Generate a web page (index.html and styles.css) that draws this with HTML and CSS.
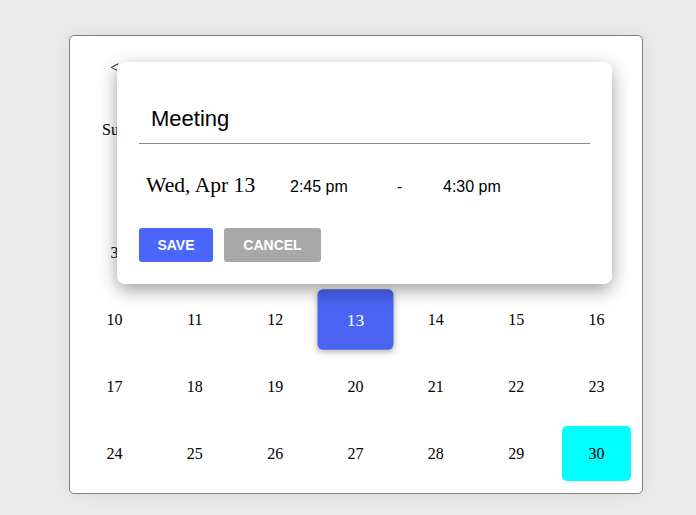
FILE: index.html
```html
<!DOCTYPE html>
<html>
<head>
<meta charset="utf-8">
<link rel="stylesheet" href="styles.css">
</head>
<body>
<div class="calendar">
  <div class="cal-header">
    <span class="nav">&lt;</span>
    <span class="month">April 2022</span>
    <span class="nav">&gt;</span>
  </div>
  <div class="weekdays">
    <span>Sun</span><span>Mon</span><span>Tue</span><span>Wed</span><span>Thu</span><span>Fri</span><span>Sat</span>
  </div>
  <div class="days">
    <span class="day"></span><span class="day"></span><span class="day"></span><span class="day"></span><span class="day"></span><span class="day">1</span><span class="day">2</span>
    <span class="day">3</span><span class="day">4</span><span class="day">5</span><span class="day">6</span><span class="day">7</span><span class="day">8</span><span class="day">9</span>
    <span class="day">10</span><span class="day">11</span><span class="day">12</span><span class="day selected">13</span><span class="day">14</span><span class="day">15</span><span class="day">16</span>
    <span class="day">17</span><span class="day">18</span><span class="day">19</span><span class="day">20</span><span class="day">21</span><span class="day">22</span><span class="day">23</span>
    <span class="day">24</span><span class="day">25</span><span class="day">26</span><span class="day">27</span><span class="day">28</span><span class="day">29</span><span class="day today">30</span>
  </div>

  <div class="popup">
    <div class="title-input">Meeting</div>
    <div class="when">
      <span class="date">Wed, Apr 13</span>
      <span class="time start">2:45 pm</span>
      <span class="dash">-</span>
      <span class="time end">4:30 pm</span>
    </div>
    <div class="actions">
      <button class="btn save">SAVE</button>
      <button class="btn cancel">CANCEL</button>
    </div>
  </div>
</div>
</body>
</html>
```

FILE: styles.css
```css
html, body {
  margin: 0;
  padding: 0;
}
body {
  background: #ebebeb;
  width: 696px;
  height: 515px;
  overflow: hidden;
  font-family: "Liberation Serif", "Times New Roman", serif;
  color: #000;
}

.calendar {
  position: relative;
  box-sizing: border-box;
  margin: 35px 0 0 69px;
  width: 574px;
  height: 459px;
  background: #fff;
  border: 1px solid #808080;
  border-radius: 5px;
  padding: 10px 11px 11px 10px;
  box-shadow: 0 0 22px rgba(0, 0, 0, 0.07);
}

.cal-header {
  display: grid;
  grid-template-columns: 69px 1fr 69px;
  height: 44px;
  line-height: 44px;
  font-size: 16px;
  text-align: center;
  margin-bottom: 24px;
}

.month {
  padding-top: 10px;
}

.weekdays {
  display: grid;
  grid-template-columns: repeat(7, 1fr);
  column-gap: 11.33px;
  height: 32px;
  line-height: 32px;
  font-size: 16px;
  text-align: center;
}

.days {
  display: grid;
  grid-template-columns: repeat(7, 1fr);
  grid-auto-rows: 55px;
  column-gap: 11.33px;
  row-gap: 12px;
  margin-top: 12px;
}

.day {
  display: flex;
  align-items: center;
  justify-content: center;
  font-size: 16px;
  border-radius: 5px;
}

.day.selected {
  background: #4a64f2;
  color: #fff;
  transform: scale(1.1);
  box-shadow: 0 2px 6px rgba(0, 0, 0, 0.3);
}

.day.today {
  background: #00ffff;
}

.popup {
  position: absolute;
  left: 47px;
  top: 26px;
  box-sizing: border-box;
  width: 495px;
  height: 222px;
  background: #fff;
  border-radius: 8px;
  padding: 38px 22px 22px 22px;
  box-shadow: 0 6px 18px rgba(0, 0, 0, 0.38);
  font-family: "Liberation Sans", Arial, sans-serif;
}

.title-input {
  font-size: 22px;
  line-height: 38px;
  padding: 0 12px 5px 12px;
  border-bottom: 1px solid #8a8a8a;
}

.when {
  display: flex;
  align-items: baseline;
  margin-top: 26px;
  padding-left: 7px;
  line-height: 30px;
}

.date {
  font-family: "Liberation Serif", "Times New Roman", serif;
  font-size: 21.6px;
  width: 144px;
}

.time {
  font-size: 16px;
}

.start {
  width: 107px;
}

.dash {
  font-size: 16px;
  width: 46px;
}

.actions {
  display: flex;
  gap: 11px;
  margin-top: 26px;
}

.btn {
  height: 34px;
  border: none;
  border-radius: 3px;
  color: #fff;
  font-family: "Liberation Sans", Arial, sans-serif;
  font-weight: bold;
  font-size: 14px;
  padding: 0;
}

.save {
  width: 74px;
  background: #4a66fb;
}

.cancel {
  width: 97px;
  background: #a8a8a8;
}
```
